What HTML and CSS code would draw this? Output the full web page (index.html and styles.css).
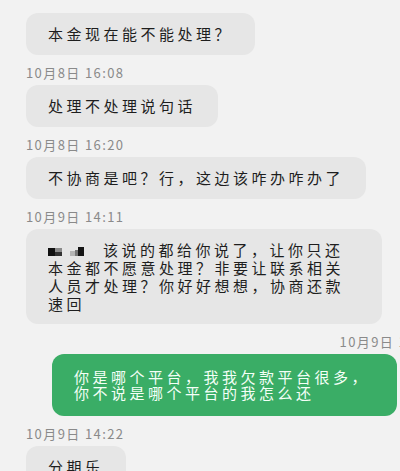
FILE: index.html
```html
<!DOCTYPE html>
<html lang="zh">
<head>
    <meta charset="UTF-8">
    <meta name="viewport" content="width=device-width, initial-scale=1.0">
    <title>聊天记录</title>
    <link rel="stylesheet" href="styles.css">
</head>
<body>
    <!-- 聊天记录 -->
    <div class="chat">
        <div class="row">
            <div class="bubble">本金现在能不能处理？</div>
        </div>

        <div class="time">10月8日 16:08</div>
        <div class="row">
            <div class="bubble">处理不处理说句话</div>
        </div>

        <div class="time">10月8日 16:20</div>
        <div class="row">
            <div class="bubble">不协商是吧？行，这边该咋办咋办了</div>
        </div>

        <div class="time">10月9日 14:11</div>
        <div class="row">
            <div class="bubble bubble-long">
                <svg class="mosaic" width="40" height="10" viewBox="0 0 40 10">
                    <rect x="0" y="1" width="7" height="8" fill="#111"/>
                    <rect x="7" y="1" width="7" height="4" fill="#8a8a8a"/>
                    <rect x="7" y="5" width="7" height="4" fill="#333"/>
                    <rect x="22" y="4" width="5" height="5" fill="#b5b5b5"/>
                    <rect x="27" y="3" width="3" height="6" fill="#777"/>
                    <rect x="30" y="0" width="6" height="9" fill="#151515"/>
                </svg>该说的都给你说了，让你只还本金都不愿意处理？非要让联系相关人员才处理？你好好想想，协商还款速回
            </div>
        </div>

        <div class="time time-right">10月9日 14:12</div>
        <div class="row row-right">
            <div class="bubble bubble-me">你是哪个平台，我我欠款平台很多，你不说是哪个平台的我怎么还</div>
        </div>

        <div class="time">10月9日 14:22</div>
        <div class="row">
            <div class="bubble">分期乐</div>
        </div>
    </div>
</body>
</html>
```

FILE: styles.css
```css
/* 基础样式重置 */
* {
    margin: 0;
    padding: 0;
    box-sizing: border-box;
}

body {
    font-family: "Noto Sans CJK SC", "Noto Sans", sans-serif;
    background-color: #f2f2f2;
    overflow: hidden;
}

/* 聊天列表 */
.chat {
    display: flex;
    flex-direction: column;
    padding: 13px 0 0 26px;
}

.row {
    display: flex;
}

.row-right {
    justify-content: flex-end;
    padding-right: 3px;
}

/* 时间 */
.time {
    font-size: 13px;
    line-height: 16px;
    letter-spacing: 1.4px;
    color: #8a8a8a;
    margin: 10px 0 4px;
    white-space: nowrap;
}

.time-right {
    text-align: right;
    margin-right: -38px;
}

/* 气泡 */
.bubble {
    max-width: 356px;
    padding: 11px 22px;
    background: #e6e6e6;
    color: #1e1e1e;
    font-size: 15px;
    line-height: 20px;
    letter-spacing: 3.5px;
    border-radius: 12px;
}

.bubble-long {
    width: 356px;
    line-height: 18px;
    padding: 12px 22px 11px;
}

.mosaic {
    display: inline-block;
    vertical-align: -1px;
    margin-right: 15px;
}

.bubble-me {
    width: 345px;
    background: #3aad66;
    color: #f4fff7;
    line-height: 16px;
    padding: 15px 22px 15px;
}
```
